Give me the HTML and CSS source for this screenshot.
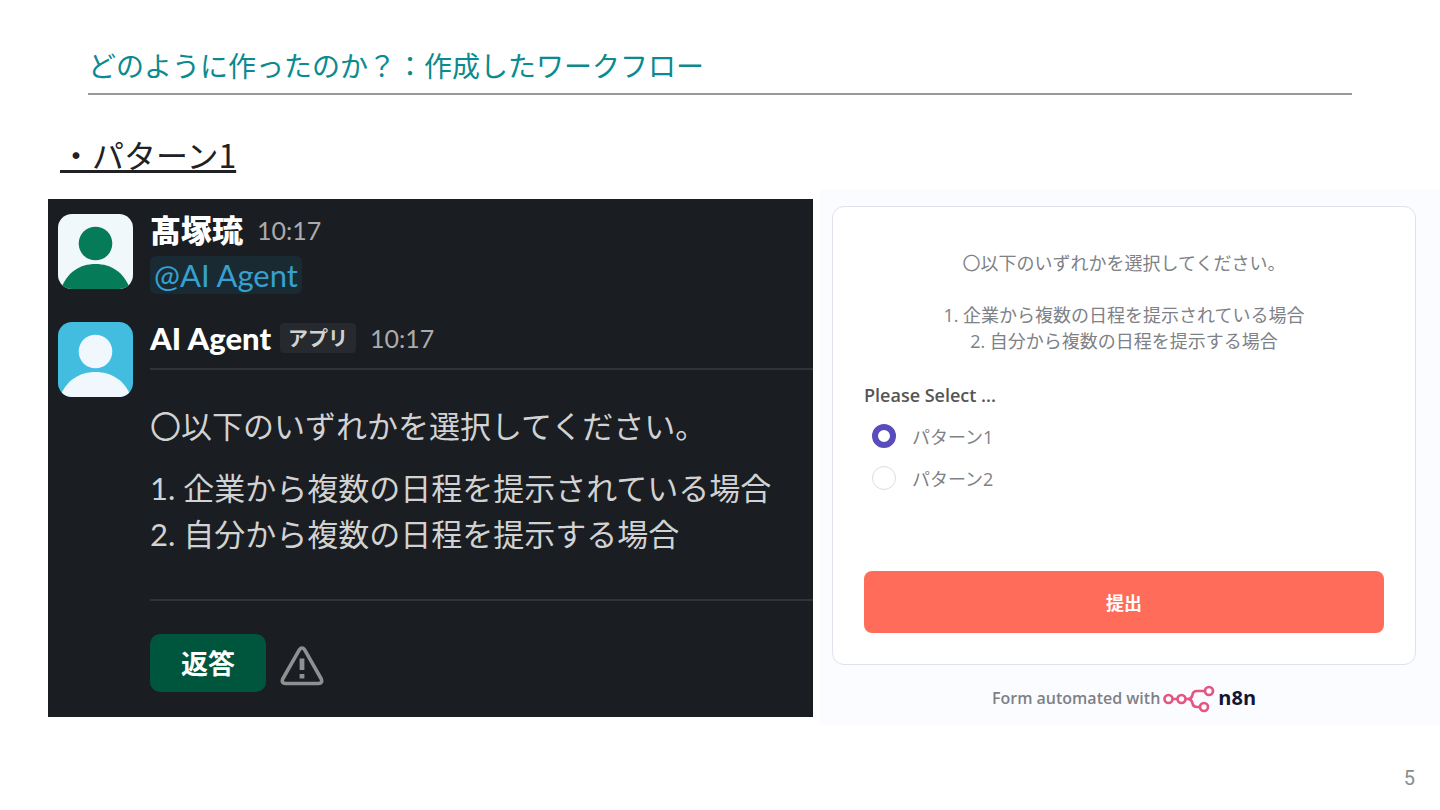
FILE: index.html
```
<!DOCTYPE html>
<html lang="ja">
<head>
    <meta charset="utf-8">
    <title>作成したワークフロー</title>
    <link rel="stylesheet" href="styles.css">
</head>
<body>
    <header class="slide-header">
        <h1>どのように作ったのか？：作成したワークフロー</h1>
    </header>
    <h2 class="pattern-title">・パターン1</h2>

    <main class="panels">
        <section class="slack">
            <article class="message">
                <svg class="avatar" viewBox="0 0 75 75" aria-hidden="true">
                    <rect width="75" height="75" fill="#f1f8fb"/>
                    <circle cx="37.5" cy="29.5" r="16.8" fill="#067b57"/>
                    <path d="M3 75C9 58 22 50 37.5 50S66 58 72 75z" fill="#067b57"/>
                </svg>
                <div class="message-main">
                    <div class="message-head">
                        <strong class="name">髙塚琉</strong>
                        <time class="time">10:17</time>
                    </div>
                    <a class="mention" href="#">@AI Agent</a>
                </div>
            </article>

            <article class="message">
                <svg class="avatar" viewBox="0 0 75 75" aria-hidden="true">
                    <rect width="75" height="75" fill="#42bde0"/>
                    <circle cx="37.5" cy="29.5" r="16.8" fill="#f1f8fd"/>
                    <path d="M2 75C8 58 22 50 37.5 50S67 58 73 75z" fill="#f1f8fd"/>
                </svg>
                <div class="message-main">
                    <div class="message-head">
                        <strong class="name">AI Agent</strong>
                        <span class="app-tag">アプリ</span>
                        <time class="time">10:17</time>
                    </div>
                    <div class="message-body">
                        <p>〇以下のいずれかを選択してください。</p>
                        <p>1. 企業から複数の日程を提示されている場合<br>2. 自分から複数の日程を提示する場合</p>
                    </div>
                    <div class="actions">
                        <button class="reply" type="button">返答</button>
                        <svg class="warning" viewBox="0 0 44 40" aria-hidden="true">
                            <path d="M19.3 3.8Q22 0.3 24.7 3.8L41.3 33Q42.8 37.3 38.5 37.5H5.5Q1.2 37.3 2.7 33Z" fill="none" stroke="#8f9092" stroke-width="3.6" stroke-linejoin="round"/>
                            <path d="M22 12.5V24M22 28V32.5" stroke="#8f9092" stroke-width="4.8"/>
                        </svg>
                    </div>
                </div>
            </article>
        </section>

        <section class="form-page">
            <form class="card">
                <p class="intro">〇以下のいずれかを選択してください。<br><br>1. 企業から複数の日程を提示されている場合<br>2. 自分から複数の日程を提示する場合</p>
                <fieldset class="options">
                    <legend>Please Select ...</legend>
                    <label><input type="radio" name="pattern" value="1" checked>パターン1</label>
                    <label><input type="radio" name="pattern" value="2">パターン2</label>
                </fieldset>
                <button class="submit" type="button">提出</button>
            </form>
            <div class="credit">
                <span>Form automated with</span>
                <a class="brand" href="#">
                    <svg class="brand-icon" viewBox="0 0 52 28" aria-hidden="true">
                        <g fill="none" stroke="#e4557f" stroke-width="2.7">
                            <circle cx="4.5" cy="15" r="4"/>
                            <circle cx="17.5" cy="15" r="4"/>
                            <circle cx="45" cy="7" r="4"/>
                            <circle cx="40" cy="23" r="4"/>
                            <path d="M8.5 15H13.5M21.5 15H24C28 15 28 12.5 28.5 10.5C29 8 30.5 7 33 7H41M24 15C28 15 28 17.5 28.5 19.5C29 22 30.5 23 33 23H36"/>
                        </g>
                    </svg>
                    <span>n8n</span>
                </a>
            </div>
        </section>
    </main>
    <footer class="page-number">5</footer>
</body>
</html>
```
FILE: styles.css
```
* { box-sizing: border-box; }
body {
    margin: 0; background: #fff; color: #202124;
    font-family: "Noto Sans CJK JP", sans-serif;
}
h1, h2, p { margin: 0; font-weight: normal; }
a { text-decoration: none; }
svg { display: block; flex: none; }
button { border: none; color: #fff; cursor: pointer; font-family: inherit; font-weight: bold; }

.slide-header {
    margin: 0 88px; padding: 46px 0 8px;
    border-bottom: 2px solid #999;
}
.slide-header h1 { font-size: 28px; line-height: 39px; color: #0b8a8f; }
.pattern-title {
    margin: 35px 60px 20px; font-size: 32px; line-height: 48px;
    text-decoration: underline; text-decoration-thickness: 3px;
    text-underline-offset: 2px; text-decoration-skip-ink: none;
}
.panels {
    display: grid; grid-template-columns: 765fr 620fr; gap: 7px;
    align-items: center; padding-left: 48px; margin-top: -8px;
}

/* Slack thread */
.slack {
    display: flex; flex-direction: column; gap: 28px;
    padding: 15px 0 25px 10px; background: #1a1d21; color: #d1d2d3;
    font-family: Lato, "Noto Sans CJK JP", sans-serif;
}
.message { display: flex; gap: 17px; }
.avatar { width: 75px; height: 75px; border-radius: 14px; }
.message-main { flex: 1; min-width: 0; }
.message-head { display: flex; align-items: center; height: 32px; gap: 14px; }
.name { color: #fff; font-size: 31px; font-weight: 900; line-height: 32px; }
.time { color: #ababad; font-size: 25px; }
.app-tag {
    margin-left: -5px; padding: 0 8px; border-radius: 4px;
    background: #26292d; font-size: 20px; font-weight: bold; line-height: 30px;
}
.mention {
    display: inline-block; margin-top: 10px; padding: 0 4px; border-radius: 6px;
    background: #1a2a33; color: #36a0d0; font-size: 31px; line-height: 38px;
}
.message-body {
    display: flex; flex-direction: column; gap: 16px;
    margin: 14px 0 33px; padding: 33px 0 42px;
    border: solid #303337; border-width: 2px 0;
    font-size: 31px; line-height: 46px;
}
.actions { display: flex; align-items: center; gap: 14px; }
.reply {
    width: 116px; height: 58px; border-radius: 10px;
    background: #00553d; font-size: 27px;
}
.warning { width: 44px; height: 40px; margin-top: 6px; }

/* n8n form */
.form-page {
    padding: 16px 24px 12px 12px; background: #fbfcff; color: #7e8186;
    font-family: "Open Sans", "Noto Sans CJK JP", sans-serif;
}
.card {
    padding: 43px 31px 31px; background: #fff;
    border: 1px solid #dfe2ea; border-radius: 12px;
}
.intro { font-size: 18px; line-height: 26px; text-align: center; }
.options { margin: 27px 0 72px; padding: 0; border: none; }
.options legend { padding: 0; margin-bottom: 6px; color: #555; font-size: 18px; font-weight: 600; line-height: 28px; }
.options label { display: flex; align-items: center; gap: 16px; height: 42px; padding-left: 8px; font-size: 18px; }
.options input {
    appearance: none; width: 24px; height: 24px; margin: 0;
    border: 1px solid #dcdde2; border-radius: 50%; background: #fff;
}
.options input:checked { border: 6px solid #594cbd; }
.submit {
    width: 100%; height: 62px; border-radius: 8px;
    background: #ff6d5a; font-size: 18px;
}
.credit {
    display: flex; align-items: center; justify-content: center; gap: 4px;
    margin-top: 18px; font-size: 16px; font-weight: 600; line-height: 30px;
}
.brand { display: flex; align-items: center; gap: 2px; color: #141535; font-size: 20px; font-weight: bold; }
.brand-icon { width: 52px; height: 28px; overflow: visible; }

.page-number {
    padding: 40px 25px 0; color: #8c8c8c; text-align: right;
    font-family: Roboto, sans-serif; font-size: 20px; line-height: 26px;
}
```
